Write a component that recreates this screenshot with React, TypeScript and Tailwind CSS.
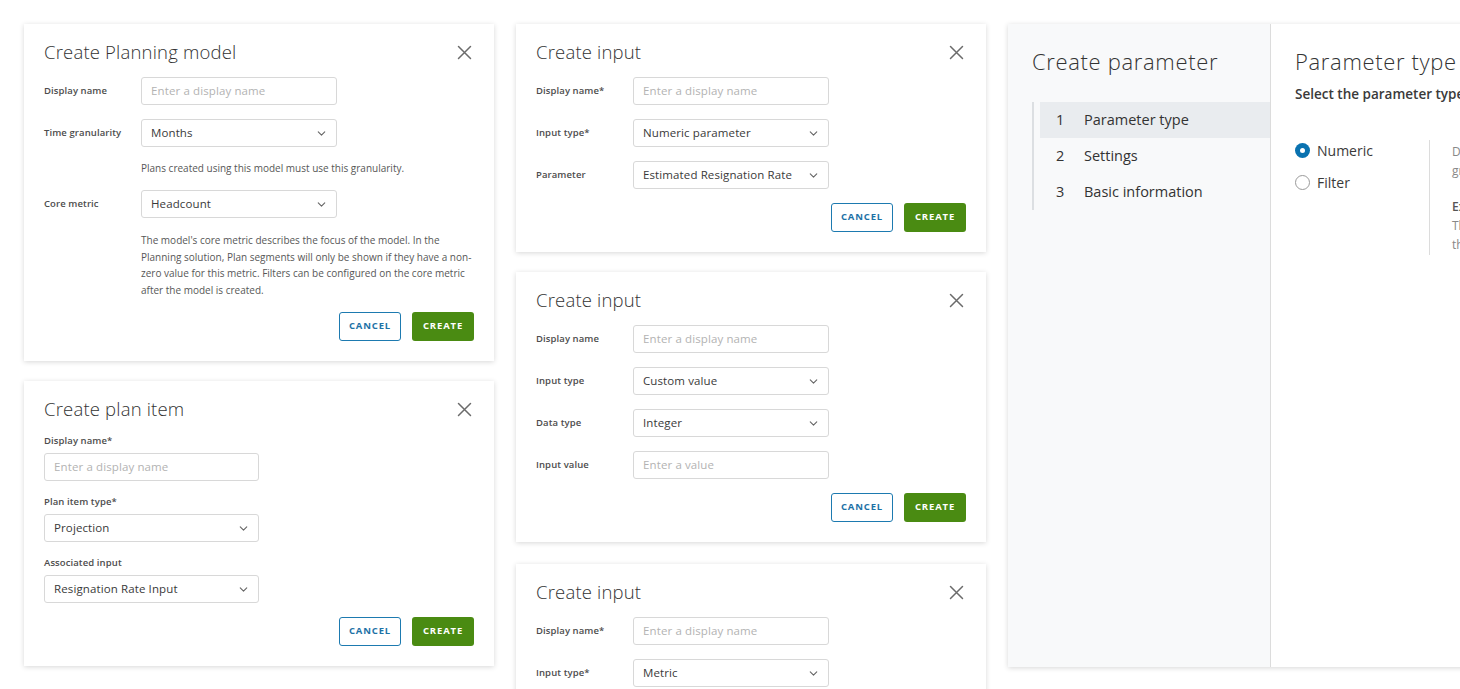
import { ChevronDown } from 'lucide-react';
import type { ReactNode } from 'react';

function CloseIcon() {
  return (
    <svg width="15" height="15" viewBox="0 0 15 15" fill="none" className="shrink-0">
      <path d="M1.5 1.5L13.5 13.5M13.5 1.5L1.5 13.5" stroke="#6b6b6b" strokeWidth="1.5" strokeLinecap="round" />
    </svg>
  );
}

function Card({ title, children }: { title: string; children: ReactNode }) {
  return (
    <div className="w-[470px] bg-white px-5 pt-[17px] pb-5 shadow-[0_1px_5px_rgba(0,0,0,0.16)]">
      <div className="flex h-[22px] items-center justify-between pr-[2px]">
        <h2 className="text-[18.5px] leading-[22px] font-light tracking-[0.01em] text-[#333]">{title}</h2>
        <CloseIcon />
      </div>
      <div className="mt-[14px]">{children}</div>
    </div>
  );
}

function TextBox({ placeholder, width = 'w-[196px]' }: { placeholder: string; width?: string }) {
  return (
    <div className={`${width} flex h-[28px] items-center rounded-[3px] border border-[#d8d8d8] px-[9px] text-[11.5px] tracking-[0.01em] text-[#b3b3b3]`}>
      {placeholder}
    </div>
  );
}

function SelectBox({ value, width = 'w-[196px]' }: { value: string; width?: string }) {
  return (
    <div className={`${width} flex h-[28px] items-center justify-between rounded-[3px] border border-[#d8d8d8] pr-[8px] pl-[9px] text-[11.5px] tracking-[0.01em] text-[#3a3a3a]`}>
      <span>{value}</span>
      <ChevronDown size={13} strokeWidth={2} color="#666" />
    </div>
  );
}

function Row({ label, children }: { label: string; children: ReactNode }) {
  return (
    <div className="flex items-center">
      <div className="w-[97px] text-[9.5px] font-semibold tracking-[0.01em] text-[#4d4d4d]">{label}</div>
      {children}
    </div>
  );
}

function Field({ label, children }: { label: string; children: ReactNode }) {
  return (
    <div>
      <div className="text-[9.5px] leading-[12px] font-semibold tracking-[0.01em] text-[#4d4d4d]">{label}</div>
      <div className="mt-[6px]">{children}</div>
    </div>
  );
}

function Actions() {
  return (
    <div className="mt-[14px] flex justify-end gap-[11px]">
      <button className="h-[29px] w-[62px] rounded-[3px] border border-[#1d7ab0] text-[9.5px] font-bold tracking-[0.09em] text-[#1d72a6]">
        CANCEL
      </button>
      <button className="h-[29px] w-[62px] rounded-[3px] bg-[#4a8b12] text-[9.5px] font-bold tracking-[0.09em] text-white">
        CREATE
      </button>
    </div>
  );
}

function Radio({ label, checked }: { label: string; checked?: boolean }) {
  return (
    <div className="flex h-[20px] items-center gap-[7px]">
      {checked ? (
        <span className="flex h-[15px] w-[15px] items-center justify-center rounded-full bg-[#0a72b0]">
          <span className="h-[5px] w-[5px] rounded-full bg-white" />
        </span>
      ) : (
        <span className="h-[15px] w-[15px] rounded-full border border-[#9a9a9a] bg-white" />
      )}
      <span className="text-[14px] text-[#3a3a3a]">{label}</span>
    </div>
  );
}

export default function App() {
  return (
    <div className="flex h-[689px] w-[1460px] items-start gap-[22px] overflow-hidden bg-white p-6 font-['Open_Sans',sans-serif]">
      <div className="flex shrink-0 flex-col gap-5">
        <Card title="Create Planning model">
          <div className="flex flex-col gap-[14px]">
            <Row label="Display name">
              <TextBox placeholder="Enter a display name" />
            </Row>
            <Row label="Time granularity">
              <SelectBox value="Months" />
            </Row>
            <p className="ml-[97px] text-[10px] leading-[15px] text-[#575757]">
              Plans created using this model must use this granularity.
            </p>
            <Row label="Core metric">
              <SelectBox value="Headcount" />
            </Row>
            <p className="ml-[97px] text-[10px] leading-[16.5px] text-[#575757]">
              The model's core metric describes the focus of the model. In the
              <br />
              Planning solution, Plan segments will only be shown if they have a non-
              <br />
              zero value for this metric. Filters can be configured on the core metric
              <br />
              after the model is created.
            </p>
          </div>
          <Actions />
        </Card>

        <Card title="Create plan item">
          <div className="flex flex-col gap-[15px] pt-px">
            <Field label="Display name*">
              <TextBox placeholder="Enter a display name" width="w-[215px]" />
            </Field>
            <Field label="Plan item type*">
              <SelectBox value="Projection" width="w-[215px]" />
            </Field>
            <Field label="Associated input">
              <SelectBox value="Resignation Rate Input" width="w-[215px]" />
            </Field>
          </div>
          <Actions />
        </Card>
      </div>

      <div className="flex shrink-0 flex-col">
        <Card title="Create input">
          <div className="flex flex-col gap-[14px]">
            <Row label="Display name*">
              <TextBox placeholder="Enter a display name" />
            </Row>
            <Row label="Input type*">
              <SelectBox value="Numeric parameter" />
            </Row>
            <Row label="Parameter">
              <SelectBox value="Estimated Resignation Rate" />
            </Row>
          </div>
          <Actions />
        </Card>

        <div className="mt-5">
          <Card title="Create input">
            <div className="flex flex-col gap-[14px]">
              <Row label="Display name">
                <TextBox placeholder="Enter a display name" />
              </Row>
              <Row label="Input type">
                <SelectBox value="Custom value" />
              </Row>
              <Row label="Data type">
                <SelectBox value="Integer" />
              </Row>
              <Row label="Input value">
                <TextBox placeholder="Enter a value" />
              </Row>
            </div>
            <Actions />
          </Card>
        </div>

        <div className="mt-[22px]">
          <Card title="Create input">
            <div className="flex flex-col gap-[14px]">
              <Row label="Display name*">
                <TextBox placeholder="Enter a display name" />
              </Row>
              <Row label="Input type*">
                <SelectBox value="Metric" />
              </Row>
            </div>
          </Card>
        </div>
      </div>

      <div className="flex h-[643px] w-[640px] shrink-0 bg-white shadow-[0_1px_5px_rgba(0,0,0,0.16)]">
        <div className="w-[263px] shrink-0 border-r border-[#dcdcdc] bg-[#f8f9fa] pt-[23px]">
          <h2 className="pl-6 text-[22px] leading-[28px] font-light tracking-[0.03em] text-[#333]">Create parameter</h2>
          <div className="mt-[27px] ml-6 border-l-2 border-[#dcdfe2] pl-[6px]">
            <div className="flex h-9 items-center bg-[#e9ecef] pl-4 text-[14.5px] text-[#333]">
              <span className="w-7">1</span>
              <span>Parameter type</span>
            </div>
            <div className="flex h-9 items-center pl-4 text-[14.5px] text-[#333]">
              <span className="w-7">2</span>
              <span>Settings</span>
            </div>
            <div className="flex h-9 items-center pl-4 text-[14.5px] text-[#333]">
              <span className="w-7">3</span>
              <span>Basic information</span>
            </div>
          </div>
        </div>
        <div className="flex-1 pt-[23px] pl-6">
          <h2 className="text-[22px] leading-[28px] font-light tracking-[0.03em] text-[#333]">Parameter type</h2>
          <p className="mt-[10px] text-[13.5px] leading-[18px] font-semibold text-[#3a3a3a]">
            Select the parameter type that you want to create.
          </p>
          <div className="mt-[37px] flex">
            <div className="flex w-[134px] flex-col gap-3">
              <Radio label="Numeric" checked />
              <Radio label="Filter" />
            </div>
            <div className="h-[115px] border-l border-[#dcdcdc] pt-[2px] pl-[22px] text-[12px] leading-[19px] whitespace-nowrap text-[#888]">
              <div>Define a numeric value to use in calculations, such as a</div>
              <div>growth rate or a percentage.</div>
              <div className="mt-[17px] font-semibold text-[#555]">Example</div>
              <div>The estimated resignation rate used to project</div>
              <div>the headcount for each period.</div>
            </div>
          </div>
        </div>
      </div>
    </div>
  );
}
